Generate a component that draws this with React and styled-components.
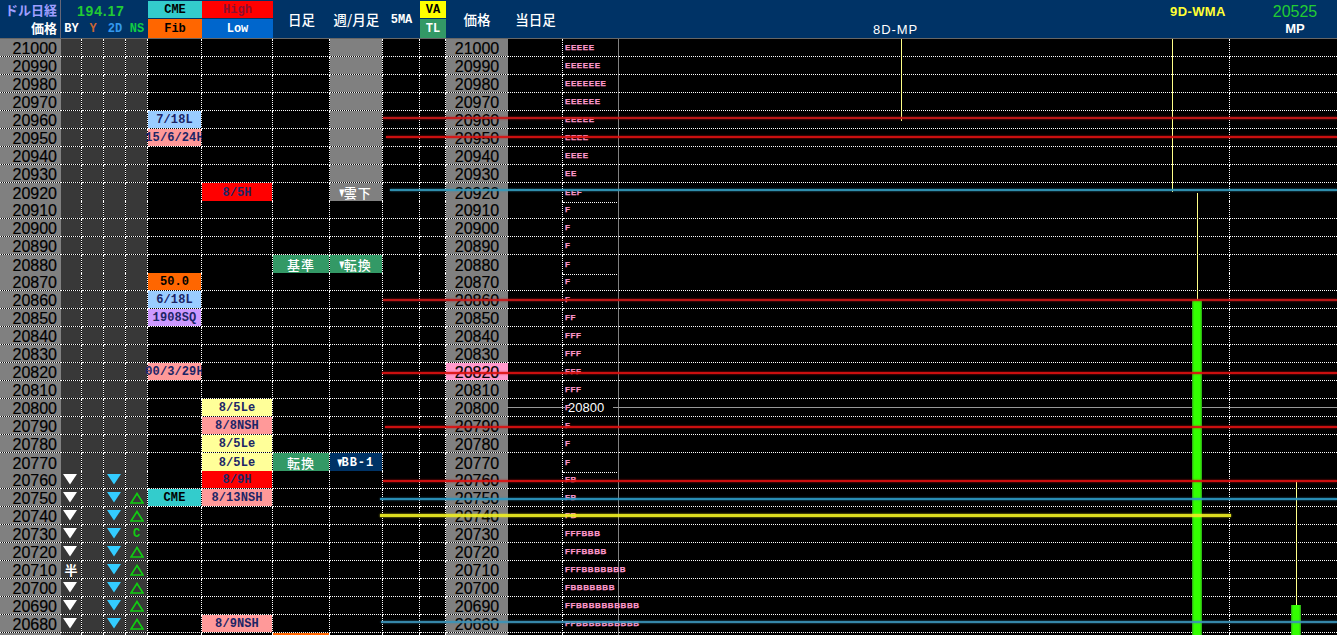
import React from "react"
import styled, { createGlobalStyle } from "styled-components"

const COLS = "61px 21px 22px 22px 22px 54px 71px 57px 53px 37px 26px 62px 55px 56px 611px 107px"
const JP = `"Noto Sans CJK JP", "Liberation Sans", sans-serif`
const MONO = `"Liberation Mono", "DejaVu Sans Mono", monospace`
const SANS = `"Liberation Sans", Arial, sans-serif`

const palette = {
  sky: "#99ccff",
  rose: "#ff9999",
  red: "#ff0000",
  orange: "#ff6600",
  violet: "#cc99ff",
  cream: "#ffff99",
  teal: "#33cccc",
  green: "#339966",
  navy: "#003366",
  gray: "#808080",
}

const cmeLabels = {
  20960: ["7/18L", "sky"],
  20950: ["15/6/24H", "rose"],
  20870: ["50.0", "orange"],
  20860: ["6/18L", "sky"],
  20850: ["1908SQ", "violet"],
  20820: ["00/3/29H", "rose"],
  20750: ["CME", "teal"],
}
const highLabels = {
  20920: ["8/5H", "red"],
  20800: ["8/5Le", "cream"],
  20790: ["8/8NSH", "rose"],
  20780: ["8/5Le", "cream"],
  20770: ["8/5Le", "cream"],
  20760: ["8/9H", "red"],
  20750: ["8/13NSH", "rose"],
  20680: ["8/9NSH", "rose"],
}
const dayLabels = {
  20880: ["基準", "green"],
  20770: ["転換", "green"],
  20670: ["", "orange"],
}
const weekLabels = {
  20920: ["雲下", "gray"],
  20880: ["転換", "green"],
  20770: ["BB-1", "navy"],
}
const tpo = {
  21000: "EEEEE", 20990: "EEEEEE", 20980: "EEEEEEE", 20970: "EEEEEE", 20960: "EEEEE",
  20950: "EEEE", 20940: "EEEE", 20930: "EE", 20920: "EEF", 20910: "F", 20900: "F",
  20890: "F", 20880: "F", 20870: "F", 20860: "F", 20850: "FF", 20840: "FFF",
  20830: "FFF", 20820: "FFF", 20810: "FFF", 20800: "F", 20790: "F", 20780: "F",
  20770: "F", 20760: "FB", 20750: "FB", 20740: "FB", 20730: "FFFBBB", 20720: "FFFBBBB",
  20710: "FFFBBBBBBB", 20700: "FBBBBBBB", 20690: "FFBBBBBBBBBB", 20680: "FFBBBBBBBBBB",
}

const prices = Array.from({ length: 34 }, (_, i) => 21000 - i * 10)
const LAST_PRICE = 20670

const levels = [
  { y: 118, x: 383, color: "#c81818" },
  { y: 137, x: 386, color: "#dd1111" },
  { y: 190, x: 390, color: "#3399bb" },
  { y: 300, x: 383, color: "#c81818" },
  { y: 373, x: 382, color: "#dd1111" },
  { y: 427, x: 385, color: "#dd1111" },
  { y: 481, x: 383, color: "#dd1111" },
  { y: 499, x: 380, color: "#2d99c4" },
  { y: 515, x: 380, color: "#eeee22", end: 1231, thick: 3 },
  { y: 622, x: 381, color: "#3b93b8" },
]
const stems = [
  { x: 901, y: 39, h: 82 },
  { x: 1172, y: 39, h: 153 },
  { x: 1197, y: 193, h: 108 },
  { x: 1296, y: 480, h: 126 },
]

const GlobalStyle = createGlobalStyle`
  html, body {
    margin: 0;
    background: #000;
    overflow: hidden;
  }
`
const Page = styled.div`
  position: relative;
  width: 1337px;
  height: 635px;
  overflow: hidden;
  background: #000;
`
const Header = styled.header`
  display: grid;
  grid-template-columns: ${COLS};
  height: 38px;
  background: #003366;
  border-bottom: 1px solid #666;
  box-sizing: content-box;
`
const TitleCell = styled.div`
  box-sizing: border-box;
  display: flex;
  flex-direction: column;
  align-items: flex-end;
  padding: 1px 3px 0 0;
  border-right: 1px solid #667;
  font-family: ${JP};
  font-size: 13px;
  font-weight: 700;
  color: #fff;
`
const TitleLine = styled.span`
  display: block;
  height: 18px;
  line-height: 18px;
  overflow: hidden;
  white-space: nowrap;
  color: ${(p) => p.$color || "#fff"};
`
const SignalHead = styled.div`
  grid-column: span 4;
  display: flex;
  flex-direction: column;
`
const Rate = styled.div`
  height: 21px;
  padding-left: 16px;
  font-family: ${SANS};
  font-size: 14px;
  font-weight: 700;
  letter-spacing: 0.8px;
  line-height: 23px;
  color: #22cc33;
`
const SignalLabels = styled.div`
  display: grid;
  grid-template-columns: 21px 22px 22px 22px;
`
const SignalLabel = styled.span`
  font-family: ${MONO};
  font-size: 12px;
  font-weight: 700;
  line-height: 17px;
  text-align: center;
  color: ${(p) => p.$color};
`
const HeadStack = styled.div`
  display: grid;
  grid-template-rows: 17px 19px;
  gap: 1px;
  padding-top: 1px;
  margin-bottom: -1px;
`
const HeadChip = styled.div`
  display: flex;
  align-items: center;
  justify-content: center;
  background: ${(p) => p.$bg};
  color: ${(p) => p.$color};
  font-family: ${MONO};
  font-size: 12px;
  font-weight: 700;
`
const HeadText = styled.div`
  display: flex;
  align-items: center;
  justify-content: center;
  font-family: ${JP};
  font-size: 13.5px;
  font-weight: 500;
  color: #fff;
  white-space: nowrap;
`
const HeadMono = styled(HeadText)`
  padding-top: 2px;
  font-family: ${MONO};
  font-size: 12px;
  font-weight: 700;
`
const HeadRight = styled.div`
  grid-column: span 3;
  display: flex;
  position: relative;
  font-family: ${SANS};
  font-size: 13px;
  color: #fff;
`
const MidProfile = styled.span`
  margin: 21px 0 0 310px;
  width: 297px;
  letter-spacing: 0.9px;
  line-height: 17px;
`
const WmaLabel = styled.span`
  width: 103px;
  margin-top: 3px;
  color: #ffff33;
  font-weight: 700;
  letter-spacing: 0.4px;
  line-height: 17px;
`
const ProfileStack = styled.div`
  display: flex;
  flex-direction: column;
  align-items: center;
  width: 44px;
  padding-top: 2px;
`
const ProfileValue = styled.span`
  font-size: 16px;
  line-height: 20px;
  color: #22cc33;
`
const ProfileName = styled.span`
  font-weight: 700;
  line-height: 14px;
`
const Row = styled.div`
  display: grid;
  grid-template-columns: ${COLS};
  height: 18px;
`
const Cell = styled.div`
  box-sizing: border-box;
  display: flex;
  align-items: center;
  justify-content: center;
  border-right: 1px dotted #fff;
  border-bottom: 1px dotted #fff;
  background-clip: padding-box;
  background-color: ${(p) => (p.$bg ? palette[p.$bg] : "#000")};
`
const Price = styled(Cell)`
  justify-content: ${(p) => (p.$center ? "center" : "flex-end")};
  padding: 3px ${(p) => (p.$center ? 0 : 4)}px 0 0;
  border-right: none;
  background-color: ${(p) => (p.$hot ? "#ff99cc" : "#808080")};
  font-family: ${SANS};
  font-size: 16px;
  line-height: 14px;
  color: #000;
  -webkit-text-stroke: 0.2px #000;
`
const Signal = styled(Cell)`
  background-color: #383838;
`
const SmallLetter = styled.span`
  font-family: ${(p) => (p.$jp ? JP : MONO)};
  font-size: ${(p) => (p.$jp ? 13 : 12)}px;
  font-weight: 700;
  line-height: 1;
  color: ${(p) => p.$color};
`
const Tag = styled(Cell)`
  padding-top: 1px;
  font-family: ${MONO};
  font-size: 12px;
  font-weight: 700;
  letter-spacing: 0.1px;
  white-space: nowrap;
  color: ${(p) => (p.$bg === "orange" || p.$bg === "teal" ? "#000" : "#1c2566")};
`
const Trend = styled(Cell)`
  font-family: ${JP};
  font-size: 13px;
  font-weight: 500;
  letter-spacing: 1px;
  white-space: nowrap;
  color: #fff;
`
const TrendMono = styled.span`
  font-family: ${MONO};
  font-size: 12px;
  font-weight: 700;
  letter-spacing: 1px;
`
const TrendMark = styled.span`
  display: inline-block;
  margin: 0 -2px;
  font-family: "DejaVu Sans", sans-serif;
  font-size: 10px;
  letter-spacing: 0;
  transform: scaleX(0.65);
`
const ProfileCell = styled(Cell)`
  position: relative;
  z-index: 1;
  justify-content: flex-start;
  padding-left: 2px;
  border-right: 1px solid #808080;
  background-color: transparent;
  font-family: ${SANS};
  font-size: 8px;
  font-weight: 700;
  letter-spacing: 0.6px;
  white-space: nowrap;
  color: #ff99cc;
  -webkit-text-stroke: 0.25px #ff99cc;
`
const LastCell = styled(Cell)`
  border-right: none;
`
const Chart = styled.div`
  position: absolute;
  inset: 0;
  z-index: 2;
  pointer-events: none;
`
const Guide = styled.div`
  position: absolute;
  top: 407px;
  left: ${(p) => p.$x}px;
  width: ${(p) => p.$w}px;
  height: 1px;
  background: #999;
`
const Bar = styled.div`
  position: absolute;
  left: ${(p) => p.$x}px;
  top: ${(p) => p.$y}px;
  bottom: 0;
  width: 10px;
  background: linear-gradient(90deg, #2d9c1c, #33ff00 20%, #33ff00 80%, #2d9c1c);
`
const Stem = styled.div`
  position: absolute;
  left: ${(p) => p.$x}px;
  top: ${(p) => p.$y}px;
  height: ${(p) => p.$h}px;
  width: 1px;
  background: #ffff88;
`
const Level = styled.div`
  position: absolute;
  left: ${(p) => p.$x}px;
  right: ${(p) => (p.$end ? 1337 - p.$end : 0)}px;
  top: ${(p) => p.$y - 1}px;
  height: ${(p) => p.$thick || 2}px;
  background: ${(p) => p.$color};
  box-shadow: 0 0 2px ${(p) => p.$color};
  opacity: 0.92;
`
const PriceFlag = styled.span`
  position: absolute;
  left: 568px;
  top: 400px;
  font-family: ${SANS};
  font-size: 13px;
  line-height: 15px;
  color: #fff;
`
const DownSvg = styled.svg`
  margin-right: 2px;
`

const DownMark = ({ color }) => (
  <DownSvg width="14" height="11" viewBox="0 0 14 11">
    <polygon points="0,0 14,0 7,10.5" fill={color} />
  </DownSvg>
)

const UpMark = () => (
  <svg width="14" height="12" viewBox="0 0 14 12">
    <polygon points="7,1.5 13,11 1,11" fill="none" stroke="#11cc11" strokeWidth="1.7" />
  </svg>
)

const ByCell = ({ price }) => {
  if (price > 20760 || price < 20680) return <Signal />
  if (price === 20710) {
    return (
      <Signal>
        <SmallLetter $jp $color="#fff">半</SmallLetter>
      </Signal>
    )
  }
  return (
    <Signal>
      <DownMark color="#fff" />
    </Signal>
  )
}

const NsCell = ({ price }) => {
  if (price > 20750 || price < 20680) return <Signal />
  if (price === 20730) {
    return (
      <Signal>
        <SmallLetter $color="#11cc11">C</SmallLetter>
      </Signal>
    )
  }
  return (
    <Signal>
      <UpMark />
    </Signal>
  )
}

const WeekCell = ({ price }) => {
  const label = weekLabels[price]
  if (!label) return <Trend $bg={price >= 20930 ? "gray" : null} />
  const [text, bg] = label
  return (
    <Trend $bg={bg}>
      <TrendMark>▼</TrendMark>
      {text === "BB-1" ? <TrendMono>{text}</TrendMono> : text}
    </Trend>
  )
}

const PriceRow = ({ price }) => {
  const cme = cmeLabels[price] || []
  const high = highLabels[price] || []
  const day = dayLabels[price] || []
  // the last row only shows its top two pixels, no digits reach the window
  const shown = price === LAST_PRICE ? null : price
  return (
    <Row>
      <Price>{shown}</Price>
      <ByCell price={price} />
      <Signal />
      <Signal>{price <= 20760 && price >= 20680 && <DownMark color="#33ccff" />}</Signal>
      <NsCell price={price} />
      <Tag $bg={cme[1]}>{cme[0]}</Tag>
      <Tag $bg={high[1]}>{high[0]}</Tag>
      <Trend $bg={day[1]}>{day[0]}</Trend>
      <WeekCell price={price} />
      <Cell />
      <Cell />
      <Price $center $hot={price === 20820}>{shown}</Price>
      <Cell />
      <ProfileCell>{tpo[price]}</ProfileCell>
      <Cell />
      <LastCell />
    </Row>
  )
}

const App = () => {
  return (
    <Page>
      <GlobalStyle />
      <Header>
        <TitleCell>
          <TitleLine $color="#9f9fff">ドル日経</TitleLine>
          <TitleLine>価格</TitleLine>
        </TitleCell>
        <SignalHead>
          <Rate>194.17</Rate>
          <SignalLabels>
            <SignalLabel $color="#fff">BY</SignalLabel>
            <SignalLabel $color="#cc6633">Y</SignalLabel>
            <SignalLabel $color="#3399ee">2D</SignalLabel>
            <SignalLabel $color="#11cc44">NS</SignalLabel>
          </SignalLabels>
        </SignalHead>
        <HeadStack>
          <HeadChip $bg="#33cccc" $color="#000">CME</HeadChip>
          <HeadChip $bg="#ff6600" $color="#000">Fib</HeadChip>
        </HeadStack>
        <HeadStack>
          <HeadChip $bg="#ff0000" $color="#8a1030">High</HeadChip>
          <HeadChip $bg="#0066cc" $color="#fff">Low</HeadChip>
        </HeadStack>
        <HeadText>日足</HeadText>
        <HeadText>週/月足</HeadText>
        <HeadMono>5MA</HeadMono>
        <HeadStack>
          <HeadChip $bg="#ffff00" $color="#000">VA</HeadChip>
          <HeadChip $bg="#339966" $color="#fff">TL</HeadChip>
        </HeadStack>
        <HeadText>価格</HeadText>
        <HeadText>当日足</HeadText>
        <HeadRight>
          <MidProfile>8D-MP</MidProfile>
          <WmaLabel>9D-WMA</WmaLabel>
          <ProfileStack>
            <ProfileValue>20525</ProfileValue>
            <ProfileName>MP</ProfileName>
          </ProfileStack>
        </HeadRight>
      </Header>
      {prices.map((price) => (
        <PriceRow key={price} price={price} />
      ))}
      <Chart>
        <Guide $x={507} $w={58} />
        <Guide $x={613} $w={724} />
        <PriceFlag>20800</PriceFlag>
        {stems.map((s) => (
          <Stem key={s.x} $x={s.x} $y={s.y} $h={s.h} />
        ))}
        <Bar $x={1192} $y={300} />
        <Bar $x={1291} $y={605} />
        {levels.map((l) => (
          <Level key={l.y} $x={l.x} $y={l.y} $color={l.color} $end={l.end} $thick={l.thick} />
        ))}
      </Chart>
    </Page>
  )
}

export default App
